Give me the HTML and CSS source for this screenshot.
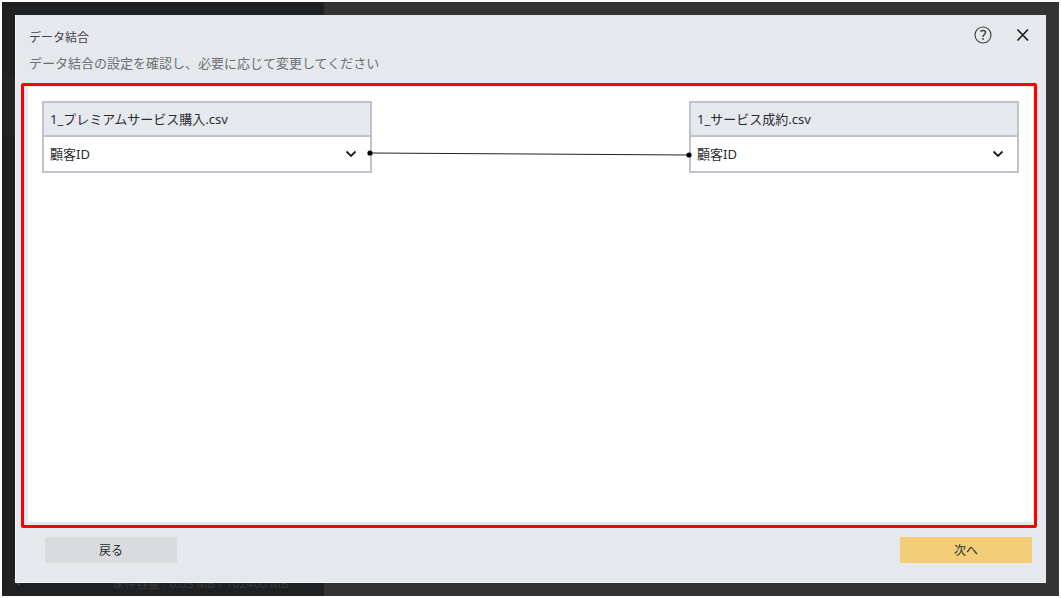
FILE: index.html
```html
<!DOCTYPE html>
<html lang="ja">
<head>
<meta charset="utf-8">
<meta name="viewport" content="width=device-width, initial-scale=1">
<title>データ結合</title>
<link rel="stylesheet" href="styles.css">
</head>
<body>
<div class="app">
  <aside class="sidebar">
    <div class="sidebar-item"></div>
    <div class="sidebar-footer">
      <svg width="8" height="12" viewBox="0 0 8 12" fill="none" stroke="#4a4b4d" stroke-width="1.500"><path d="M6.500 1L1.500 6l5 5"/></svg>
      <p class="storage">保存容量 : 0.03 MB / 102400 MB</p>
    </div>
  </aside>
  <section class="dialog" role="dialog" aria-labelledby="dialog-title">
    <header class="dialog-header">
      <div>
        <h1 class="dialog-title" id="dialog-title">データ結合</h1>
        <p class="dialog-text">データ結合の設定を確認し、必要に応じて変更してください</p>
      </div>
      <div class="dialog-tools">
        <button class="icon-button" type="button" aria-label="ヘルプ">
          <svg width="18" height="18" viewBox="0 0 18 18" fill="none" stroke="#3c3d3f">
            <circle cx="9" cy="9" r="8" stroke-width="1.1"/>
            <path d="M6.4 5.4C7.3 4.7 8.1 4.5 9 4.5c1.5 0 2.500.8 2.500 2.100 0 1.900-2.500 2-2.500 4.400" stroke-width="1.4"/>
            <circle cx="9" cy="13" r="0.9" fill="#3c3d3f" stroke="none"/>
          </svg>
        </button>
        <button class="icon-button" type="button" aria-label="閉じる">
          <svg width="18" height="18" viewBox="0 0 18 18" fill="none" stroke="#1d1d1f" stroke-width="1.700">
            <path d="M3.500 3.500l10.500 11M14 3.500l-10.500 11"/>
          </svg>
        </button>
      </div>
    </header>
    <main class="highlight">
      <div class="canvas">
        <div class="card">
          <label class="card-title" for="key-left">1_プレミアムサービス購入.csv</label>
          <div class="field">
            <select class="select" id="key-left"><option>顧客ID</option></select>
            <svg class="chevron" width="12" height="8" viewBox="0 0 12 8" fill="none" stroke="#1d1d1f" stroke-width="1.8"><path d="M1.500 1.500L6 6l4.500-4.500"/></svg>
          </div>
        </div>
        <svg class="connector" aria-hidden="true">
          <line x1="-2" y1="52" x2="100%" y2="54" stroke="#222" stroke-width="1"/>
          <circle cx="-2" cy="52" r="2.600"/>
          <circle cx="100%" cy="54" r="2.600"/>
        </svg>
        <div class="card">
          <label class="card-title" for="key-right">1_サービス成約.csv</label>
          <div class="field">
            <select class="select" id="key-right"><option>顧客ID</option></select>
            <svg class="chevron" width="12" height="8" viewBox="0 0 12 8" fill="none" stroke="#1d1d1f" stroke-width="1.8"><path d="M1.500 1.500L6 6l4.500-4.500"/></svg>
          </div>
        </div>
      </div>
    </main>
    <footer class="dialog-footer">
      <button class="button" type="button">戻る</button>
      <button class="button button-primary" type="button">次へ</button>
    </footer>
  </section>
</div>
</body>
</html>
```

FILE: styles.css
```css
* {
  box-sizing: border-box;
}

body {
  margin: 0;
  background: #fff;
  color: #2b2c2e;
  font-family: "Noto Sans", "Noto Sans CJK JP", sans-serif;
  font-size: 13px;
  line-height: 20px;
}

h1,
p {
  margin: 0;
  font-weight: 400;
}

.app {
  position: relative;
  display: flex;
  min-height: calc(100vh - 4px);
  margin: 2px;
  background: #333;
}

.sidebar {
  display: flex;
  flex-direction: column;
  justify-content: space-between;
  width: 322px;
  padding-top: 74px;
  background: #1f2122;
}

.sidebar-item {
  height: 61px;
  margin-left: 4px;
  background: #232426;
}

.sidebar-footer {
  display: flex;
  gap: 91px;
  padding: 0 0 2px 11px;
}

.storage {
  color: #38393b;
  font-size: 12px;
}

.dialog {
  position: absolute;
  inset: 13px 13px 13px;
  display: flex;
  flex-direction: column;
  padding: 0 9px 0 5px;
  border: 1px solid #f3f4f6;
  border-width: 0 0 1px 1px;
  background: #e5e9ee;
}

.dialog-header {
  display: flex;
  justify-content: space-between;
  height: 68px;
  padding: 11px 5px 0 8px;
}

.dialog-title {
  margin: 2px 0 5px;
  font-size: 12px;
  color: #444548;
}

.dialog-text {
  color: #6c6e72;
}

.dialog-tools {
  display: flex;
  align-items: flex-start;
  gap: 22px;
}

.icon-button {
  display: flex;
  padding: 0;
  border: 0;
  background: none;
}

.highlight {
  display: flex;
  flex: 1;
  padding: 1px 1px 3px 4px;
  border: 3px solid #f00;
  border-radius: 2px;
}

.canvas {
  display: flex;
  flex: 1;
  align-items: flex-start;
  padding: 14px 14px 0;
  background: #fff;
}

.card {
  flex: 0 0 330px;
  border: 2px solid #c0c3c9;
}

.card-title {
  display: block;
  padding: 6px;
  border-bottom: 2px solid #c0c3c9;
  background: #e5e9ee;
}

.field {
  display: grid;
  align-items: center;
}

.select {
  grid-area: 1 / 1;
  width: 100%;
  height: 34px;
  padding: 0 32px 0 6px;
  border: 0;
  border-radius: 0;
  appearance: none;
  background: #fff;
  color: inherit;
  font: inherit;
}

.chevron {
  grid-area: 1 / 1;
  justify-self: end;
  margin-right: 13px;
  pointer-events: none;
}

.connector {
  z-index: 1;
  flex: 1;
  min-width: 0;
  height: 72px;
  overflow: visible;
}

.dialog-footer {
  display: flex;
  justify-content: space-between;
  padding: 9px 5px 19px 24px;
}

.button {
  width: 132px;
  height: 26px;
  padding: 2px 0 0;
  border: 0;
  border-radius: 1px;
  background: #dadbdf;
  color: inherit;
  font: inherit;
  font-size: 12px;
}

.button-primary {
  background: #f3cd78;
}
```
